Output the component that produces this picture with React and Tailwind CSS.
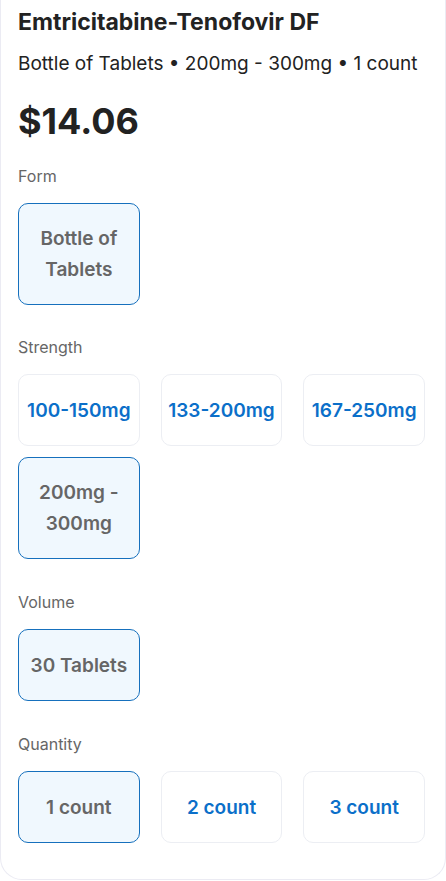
import React from 'react';

const strengths = ['100-150mg', '133-200mg', '167-250mg'];
const quantities = ['1 count', '2 count', '3 count'];

function Option({ label, selected, tall }) {
  return (
    <button
      className={`flex items-center justify-center rounded-[10px] border px-1 text-center text-[19px] font-semibold leading-[31px] ${
        tall ? 'h-[102px]' : 'h-[72px] whitespace-nowrap'
      } ${
        selected
          ? 'border-[#1670bd] bg-[#f0f8fe] text-[#666666]'
          : 'border-[#eceef3] bg-white text-[#0b6fc9]'
      }`}
    >
      {label}
    </button>
  );
}

function Section({ title, className = 'mt-[30px]', children }) {
  return (
    <div className={className}>
      <div className="text-[16px] leading-[24px] text-[#666666]">{title}</div>
      <div className="mt-[15px] grid grid-cols-3 gap-x-[21px] gap-y-[11px]">{children}</div>
    </div>
  );
}

export default function App() {
  return (
    <div className="bg-white" style={{ fontFamily: 'Inter, "Noto Sans", sans-serif' }}>
      <div className="h-[880px] w-[446px] rounded-b-[22px] border border-t-0 border-[#ebebf3] bg-white pl-[17px] pr-[20px] pt-[6px]">
        <h1 className="text-[23px] font-bold leading-[32px] text-[#222222]">Emtricitabine-Tenofovir DF</h1>
        <p className="mt-[13px] text-[19px] leading-[26px] text-[#222222]">
          Bottle of Tablets • 200mg - 300mg • 1 count
        </p>
        <div className="mt-[19px] text-[36px] font-bold leading-[50px] text-[#222222]">$14.06</div>

        <Section title="Form" className="mt-[18px]">
          <Option label={<>Bottle of<br />Tablets</>} selected tall />
        </Section>

        <Section title="Strength">
          {strengths.map((s) => (
            <Option key={s} label={s} />
          ))}
          <Option label={<>200mg -<br />300mg</>} selected tall />
        </Section>

        <Section title="Volume" className="mt-[31px]">
          <Option label="30 Tablets" selected />
        </Section>

        <Section title="Quantity" className="mt-[31px]">
          {quantities.map((q, i) => (
            <Option key={q} label={q} selected={i === 0} />
          ))}
        </Section>
      </div>
    </div>
  );
}
